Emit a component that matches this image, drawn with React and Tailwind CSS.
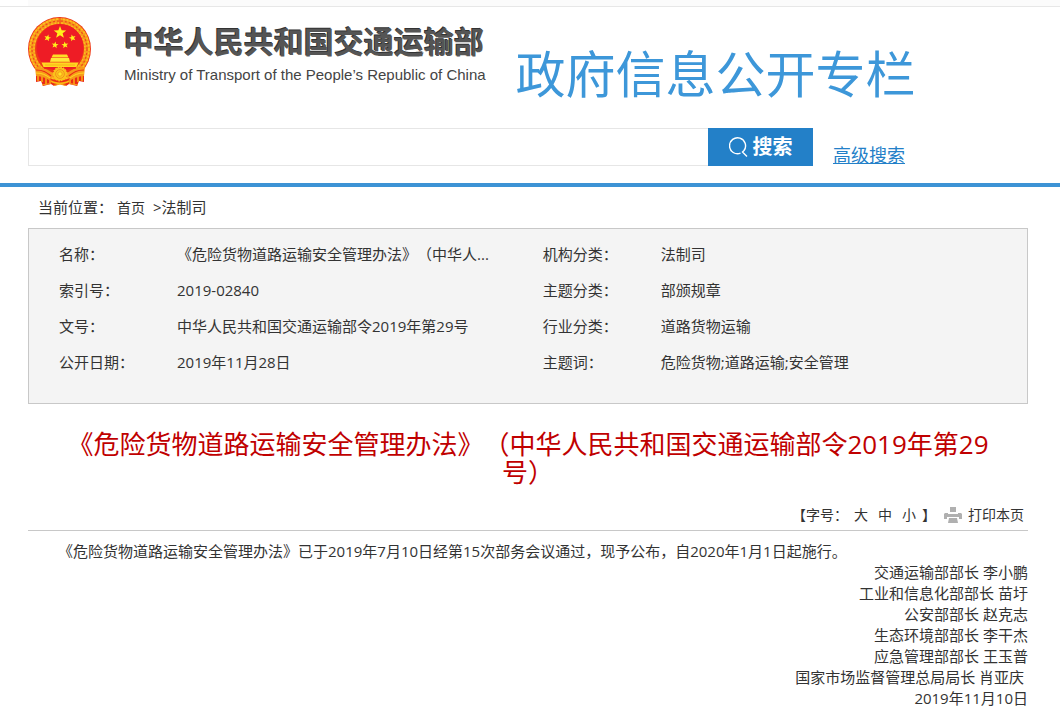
import React from 'react';

const infoRows = [
  ['名称：', '《危险货物道路运输安全管理办法》（中华人...', '机构分类：', '法制司'],
  ['索引号：', '2019-02840', '主题分类：', '部颁规章'],
  ['文号：', '中华人民共和国交通运输部令2019年第29号', '行业分类：', '道路货物运输'],
  ['公开日期：', '2019年11月28日', '主题词：', '危险货物;道路运输;安全管理'],
];

const signatures = [
  '交通运输部部长 李小鹏',
  '工业和信息化部部长 苗圩',
  '公安部部长 赵克志',
  '生态环境部部长 李干杰',
  '应急管理部部长 王玉普',
  '国家市场监督管理总局局长 肖亚庆\u00a0',
  '2019年11月10日',
];

function Star({ x, y, r, turn = 0 }) {
  const points = Array.from({ length: 10 }, (_, i) => {
    const radius = i % 2 ? r * 0.42 : r;
    const angle = (i * 36 - 90 + turn) * (Math.PI / 180);
    return `${(x + radius * Math.cos(angle)).toFixed(2)},${(y + radius * Math.sin(angle)).toFixed(2)}`;
  });
  return <polygon points={points.join(' ')} fill="#fff01a" />;
}

function Emblem() {
  return (
    <svg className="w-16 h-[70px] shrink-0" viewBox="0 0 64 70" role="img" aria-label="国徽">
      {/* ribbons */}
      <path d="M8 48 L8 65 L13 64 L15 69 L23 67 L26 69 L32 67 L38 69 L41 67 L49 69 L51 64 L56 65 L56 48 Z" fill="#ea2a16" />
      <path d="M10 56v8M14 58v7M18 59v8M22 60v6M42 60v6M46 59v8M50 58v7M54 56v8" stroke="#fbb812" strokeWidth="1.4" />
      <path d="M14 68l9-1.5M41 66.5l9 1.5M26 68.5l6-1.5 6 1.5" stroke="#f9a51a" strokeWidth="1.2" fill="none" />
      {/* wheat wreath */}
      <ellipse cx="31.5" cy="32" rx="31.5" ry="32" fill="#ee3a18" />
      <ellipse cx="31.5" cy="32" rx="27.5" ry="28" fill="none" stroke="#f7981c" strokeWidth="6" />
      <ellipse cx="31.5" cy="32" rx="29.5" ry="30" fill="none" stroke="#fdc41c" strokeWidth="1.6" strokeDasharray="2 1.5" />
      <ellipse cx="31.5" cy="32" rx="27.5" ry="28" fill="none" stroke="#ee4a1a" strokeWidth="1.2" strokeDasharray="2 2" />
      <ellipse cx="31.5" cy="32" rx="25.5" ry="26" fill="none" stroke="#fdc41c" strokeWidth="1.4" strokeDasharray="1.5 2" />
      <path d="M32 0v8" stroke="#ee3a14" strokeWidth="1" />
      <ellipse cx="32" cy="30.5" rx="23.5" ry="23.5" fill="#ee1c25" />
      <Star x={32} y={15.5} r={6.6} />
      <Star x={19.5} y={21} r={3.6} turn={15} />
      <Star x={44.5} y={21} r={3.6} turn={-15} />
      <Star x={27} y={28} r={3.6} turn={8} />
      <Star x={37} y={28} r={3.6} turn={-8} />
      {/* gate */}
      <path d="M25 37.5h14l1.5 3h-17z" fill="#ffdf24" />
      <path d="M23 41h18l1 4H22z" fill="#ffe838" />
      <path d="M22 45h20" stroke="#f28a1a" strokeWidth="0.8" />
      <path d="M13.5 45.5h37l-2 4.5h-33z" fill="#ffd820" />
      <path d="M17 48h30" stroke="#f9a716" strokeWidth="0.8" />
      {/* ribbon folds and gear */}
      <path d="M7 50 C16 50 20 53 25 56 L21 63 C16 60 12 59 8 59 Z" fill="#f79a1a" />
      <path d="M57 50 C48 50 44 53 39 56 L43 63 C48 60 52 59 56 59 Z" fill="#f79a1a" />
      <path d="M8 53 C16 53 19 56 23 59M56 53 C48 53 45 56 41 59" stroke="#ea2a16" strokeWidth="1.2" fill="none" />
      <path d="M8 56 C14 56 18 58 22 61M56 56 C50 56 46 58 42 61" stroke="#ffdb20" strokeWidth="1" fill="none" />
      <path d="M16 51h32" stroke="#ee1c25" strokeWidth="1.5" />
      <circle cx="32" cy="57" r="6.6" fill="#fbc21c" stroke="#fbc21c" strokeWidth="1.6" strokeDasharray="1.6 1" />
      <circle cx="32" cy="57" r="4.4" fill="none" stroke="#f28a1a" strokeWidth="0.9" />
      <circle cx="32" cy="57" r="2.2" fill="#ffe424" stroke="#f28a1a" strokeWidth="0.7" />
      <path d="M23 64 C27 67 37 67 41 64" stroke="#fbb812" strokeWidth="1.6" fill="none" />
    </svg>
  );
}

function SearchIcon() {
  return (
    <svg className="w-5 h-5" viewBox="0 0 20 20" fill="none" stroke="white" strokeWidth="1.4" aria-hidden="true">
      <path d="M11.5 16.2A8 8 0 1 1 15 13.5L13.5 15L18 19.5" />
    </svg>
  );
}

function PrinterIcon() {
  return (
    <svg className="w-[18px] h-4" viewBox="0 0 18 16" fill="#b0b0b0" aria-hidden="true">
      <path d="M6 0h6v5H6z" />
      <path d="M1 6h3v1h10V6h3l1 1v5h-3v-2H3v2H0V7z" />
      <path d="M5 11h8l1 5H4z" />
    </svg>
  );
}

function App() {
  return (
    <div className="bg-white text-[#333] text-[15px] leading-[21px] font-['Open_Sans','Noto_Sans_CJK_SC',sans-serif] [text-spacing-trim:space-all]">
      <div className="pl-7">
        <div className="h-1.5 bg-[#fbfbfb]" />
      </div>
      <header className="border-t border-[#e7e7e7] border-b-4 border-b-[#3d93d5] pl-7 pr-8 pt-2.5 pb-[15px]">
        <div className="flex items-start">
          <Emblem />
          <div className="ml-8">
            <h1 className="text-[30px] leading-[46px] font-bold text-[#555] [text-shadow:-1px_-1px_0_#333] whitespace-nowrap font-['Noto_Sans_CJK_SC',sans-serif]">中华人民共和国交通运输部</h1>
            <p className="text-[15px] leading-6 text-[#444] whitespace-nowrap font-['Liberation_Sans',sans-serif]">Ministry of Transport of the People’s Republic of China</p>
          </div>
          <p className="ml-[30px] pt-5 text-[50px] leading-[68px] text-[#3d97d9] whitespace-nowrap font-['Noto_Sans_CJK_SC',sans-serif]">政府信息公开专栏</p>
        </div>
        <form className="flex mt-[23px]" onSubmit={(e) => e.preventDefault()}>
          <input type="text" aria-label="搜索" className="flex-1 min-w-0 max-w-[680px] h-[38px] px-3 border border-r-0 border-[#e6e6e6] outline-none" />
          <button type="submit" className="flex items-center justify-center gap-1 w-[105px] h-[38px] shrink-0 bg-[#2380c8] text-white text-xl font-bold">
            <SearchIcon />
            搜索
          </button>
          <a href="#" className="ml-5 pt-3.5 text-lg leading-[26px] text-[#2380c8] underline whitespace-nowrap">高级搜索</a>
        </form>
      </header>

      <main className="pl-7 pr-8">
        <nav className="h-[41px] pl-2.5 flex items-center">
          <span>当前位置：</span>
          <a href="#" className="ml-1 text-sm">首页</a>
          <span className="ml-2">&gt;法制司</span>
        </nav>

        <section className="bg-[#f4f4f4] border border-[#c8c8c8] px-[30px] pt-[7px] pb-[23px]">
          <table className="w-full table-fixed text-left">
            <colgroup>
              <col className="w-[118px]" />
              <col className="w-[39%]" />
              <col className="w-[118px]" />
              <col />
            </colgroup>
            <tbody>
              {infoRows.map(([nameA, valueA, nameB, valueB]) => (
                <tr key={nameA} className="h-9">
                  <th scope="row" className="font-normal">{nameA}</th>
                  <td className="truncate">{valueA}</td>
                  <th scope="row" className="font-normal">{nameB}</th>
                  <td>{valueB}</td>
                </tr>
              ))}
            </tbody>
          </table>
        </section>

        <h2 className="mt-[26px] px-5 text-center text-[26px] leading-7 text-[#c00000]">
          《危险货物道路运输安全管理办法》（中华人民共和国交通运输部令2019年第29号）
        </h2>

        <div className="mt-[18px] h-[27px] pb-1 pr-1 flex items-end justify-end text-sm leading-[22px] border-b border-[#c8c8c8]">
          <span>【字号：</span>
          <button type="button" className="ml-1.5">大</button>
          <button type="button" className="ml-2.5">中</button>
          <button type="button" className="ml-2.5">小</button>
          <span className="ml-1.5">】</span>
          <button type="button" className="ml-2 flex items-center gap-1.5">
            <PrinterIcon />
            打印本页
          </button>
        </div>

        <article className="pt-2.5">
          <p className="indent-[30px]">《危险货物道路运输安全管理办法》已于2019年7月10日经第15次部务会议通过，现予公布，自2020年1月1日起施行。</p>
          {signatures.map((line) => (
            <p key={line} className="text-right">{line}</p>
          ))}
        </article>
      </main>
    </div>
  );
}

export default App;
